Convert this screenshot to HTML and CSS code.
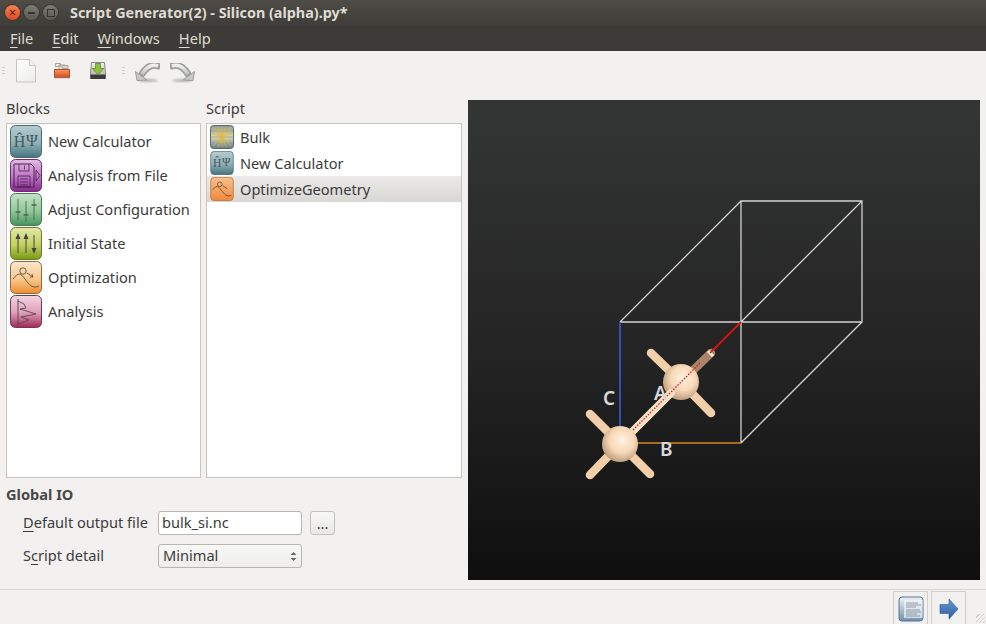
FILE: index.html
```html
<!DOCTYPE html>
<html lang="en">
<head>
<meta charset="utf-8">
<title>Script Generator(2) - Silicon (alpha).py*</title>
<link rel="stylesheet" href="styles.css">
</head>
<body>
<svg class="defs" width="0" height="0" aria-hidden="true">
  <defs>
    <linearGradient id="gCalc" x1="0" y1="0" x2="0" y2="1"><stop offset="0" stop-color="#b4ccd0"/><stop offset=".55" stop-color="#8fb0b6"/><stop offset="1" stop-color="#44727e"/></linearGradient>
    <linearGradient id="gFile" x1="0" y1="0" x2="0" y2="1"><stop offset="0" stop-color="#e2bce4"/><stop offset=".55" stop-color="#bd74c2"/><stop offset="1" stop-color="#85278f"/></linearGradient>
    <linearGradient id="gAdj" x1="0" y1="0" x2="0" y2="1"><stop offset="0" stop-color="#c5e2c6"/><stop offset=".55" stop-color="#93c89a"/><stop offset="1" stop-color="#43955a"/></linearGradient>
    <linearGradient id="gInit" x1="0" y1="0" x2="0" y2="1"><stop offset="0" stop-color="#e3e9a8"/><stop offset=".55" stop-color="#c0d060"/><stop offset="1" stop-color="#7b9a14"/></linearGradient>
    <linearGradient id="gOpt" x1="0" y1="0" x2="0" y2="1"><stop offset="0" stop-color="#fde6cc"/><stop offset=".55" stop-color="#fbc88e"/><stop offset="1" stop-color="#ef8d2a"/></linearGradient>
    <linearGradient id="gAna" x1="0" y1="0" x2="0" y2="1"><stop offset="0" stop-color="#f3d6e2"/><stop offset=".55" stop-color="#e09cb8"/><stop offset="1" stop-color="#a0265a"/></linearGradient>
    <linearGradient id="gOptSel" x1="0" y1="0" x2="0" y2="1"><stop offset="0" stop-color="#fbc08c"/><stop offset="1" stop-color="#f08a3c"/></linearGradient>
    <linearGradient id="gBulk" x1="0" y1="0" x2="0" y2="1"><stop offset="0" stop-color="#8a9aa0"/><stop offset=".5" stop-color="#e0d8a8"/><stop offset="1" stop-color="#5d7d94"/></linearGradient>
    <linearGradient id="gGlossy" x1="0" y1="0" x2="0" y2="1"><stop offset="0" stop-color="#efefed"/><stop offset="1" stop-color="#c4c4c2"/></linearGradient>
    <linearGradient id="gFolder" x1="0" y1="0" x2="0" y2="1"><stop offset="0" stop-color="#f59a6a"/><stop offset="1" stop-color="#d9471a"/></linearGradient>
    <linearGradient id="gDoc" x1="0" y1="0" x2="1" y2="1"><stop offset="0" stop-color="#fff"/><stop offset="1" stop-color="#ecebe9"/></linearGradient>
    <linearGradient id="gDrive" x1="0" y1="0" x2="0" y2="1"><stop offset="0" stop-color="#f2f2ee"/><stop offset="1" stop-color="#a8aaa4"/></linearGradient>
    <linearGradient id="gLog" x1="0" y1="0" x2="0" y2="1"><stop offset="0" stop-color="#eef2f6"/><stop offset="1" stop-color="#6f90b2"/></linearGradient>
    <linearGradient id="gPaper" x1="0" y1="0" x2="0" y2="1"><stop offset="0" stop-color="#eef1f4"/><stop offset="1" stop-color="#cfdbe6"/></linearGradient>
    <linearGradient id="gArrow" x1="0" y1="0" x2="0" y2="1"><stop offset="0" stop-color="#6a9ad4"/><stop offset="1" stop-color="#2a5a9c"/></linearGradient>
    <linearGradient id="gBg" x1="0" y1="0" x2="0" y2="1"><stop offset="0" stop-color="#343635"/><stop offset=".55" stop-color="#222322"/><stop offset="1" stop-color="#0f0f0f"/></linearGradient>
    <radialGradient id="gBall" cx=".56" cy=".4" r=".62"><stop offset="0" stop-color="#fff2e2"/><stop offset=".55" stop-color="#f8d8b6"/><stop offset="1" stop-color="#b89a7c"/></radialGradient>
    <filter id="soft" x="-20%" y="-40%" width="140%" height="180%"><feGaussianBlur stdDeviation="1.3"/></filter>
    <filter id="lite" x="-10%" y="-10%" width="120%" height="120%"><feGaussianBlur stdDeviation=".45"/></filter>

    <symbol id="i-calc" viewBox="0 0 32 33">
      <rect x=".5" y=".5" width="31" height="32" rx="5" fill="url(#gCalc)" stroke="#4a6a72"/>
      <text x="9.5" y="22" class="psi">Ĥ</text><text x="22" y="21" class="psi">Ψ</text>
    </symbol>
    <symbol id="i-file" viewBox="0 0 32 33">
      <rect x=".5" y=".5" width="31" height="32" rx="5" fill="url(#gFile)" stroke="#6e2a78"/>
      <path d="M4 5h17l3 3v20H4z" fill="none" stroke="#4a2050"/>
      <path d="M9 5v7h10V5M14.500 6.500v4M8 17h12v11H8zM10 20h8M10 23h8M10 26h8" fill="none" stroke="#4a2050" stroke-width=".8"/>
      <path d="M26 11l4 5.500-4 5.500z" fill="none" stroke="#4a2050" stroke-width=".8"/>
    </symbol>
    <symbol id="i-adj" viewBox="0 0 32 33">
      <rect x=".5" y=".5" width="31" height="32" rx="5" fill="url(#gAdj)" stroke="#4a7a58"/>
      <path d="M8 6v21M16 8v21M24 6v21" stroke="#4a6650" stroke-width=".9"/>
      <path d="M5.500 19h5M13.500 22h5M21.500 12h5" stroke="#4a6650" stroke-width="1.600"/>
    </symbol>
    <symbol id="i-init" viewBox="0 0 32 33">
      <rect x=".5" y=".5" width="31" height="32" rx="5" fill="url(#gInit)" stroke="#667a28"/>
      <path d="M8 26V10M16 26V10M24 8v16" stroke="#444" stroke-width="1"/>
      <path d="M5.500 12l2.500-6 2.500 6zM13.500 12l2.500-6 2.500 6zM21.500 21l2.500 6 2.500-6z" fill="#444"/>
    </symbol>
    <symbol id="i-opt" viewBox="0 0 32 33">
      <rect x=".5" y=".5" width="31" height="32" rx="5" fill="url(#gOpt)" stroke="#8a6a44"/>
      <path d="M3 18c5-7 8-6 12 0s8 10 14 7" fill="none" stroke="#5a5048" stroke-width=".9"/>
      <circle cx="13" cy="10" r="3.200" fill="none" stroke="#5a5048" stroke-width=".9"/>
      <path d="M17 12l6 4M23 16l-3 0M23 16l-1-3" fill="none" stroke="#5a5048" stroke-width=".9"/>
    </symbol>
    <symbol id="i-optsel" viewBox="0 0 32 33">
      <rect x=".5" y=".5" width="31" height="32" rx="5" fill="url(#gOptSel)" stroke="#b86a30"/>
      <path d="M3 18c5-7 8-6 12 0s8 10 14 7" fill="none" stroke="#5a4030"/>
      <circle cx="13" cy="10" r="3.200" fill="none" stroke="#5a4030"/>
      <path d="M17 12l6 4" fill="none" stroke="#5a4030"/>
    </symbol>
    <symbol id="i-ana" viewBox="0 0 32 33">
      <rect x=".5" y=".5" width="31" height="32" rx="5" fill="url(#gAna)" stroke="#6e3a50"/>
      <path d="M8 4v26" stroke="#5a4a50"/>
      <path d="M8 6l6 3 2 4-6 1 16 5-15 3 8 3-11 4" fill="none" stroke="#5a4a50" stroke-width=".9"/>
    </symbol>
    <symbol id="i-bulk" viewBox="0 0 24 24">
      <rect x=".5" y=".5" width="23" height="23" rx="3" fill="url(#gBulk)" stroke="#5a6a72"/>
      <path d="M1 6h22M1 12h22M1 18h22" stroke="#8aa0ac" stroke-width=".8"/>
      <path d="M12 12L3 2M12 12L8 2M12 12V2M12 12L16 2M12 12L21 2M12 12L2 8M12 12L22 8M12 12L3 21M12 12L8 22M12 12V22M12 12L16 22M12 12L21 21" stroke="#e8b820" stroke-width=".8"/>
    </symbol>
    <symbol id="i-undo" viewBox="0 0 26 24">
      <ellipse cx="14" cy="21.500" rx="10" ry="1.500" fill="#b0b0ae" filter="url(#soft)"/>
      <g filter="url(#lite)">
        <path d="M8 15C12 9 17 4.500 24 7" fill="none" stroke="#a0a09e" stroke-width="7" stroke-linecap="round"/>
        <path d="M8 15C12 9 17 4.500 24 7" fill="none" stroke="url(#gGlossy)" stroke-width="3.500"/>
        <path d="M1.500 12.500l1.500 9 10-.5z" fill="#c8c8c6" stroke="#9c9c9a"/>
      </g>
    </symbol>
  </defs>
</svg>

<div class="window">
  <header class="titlebar">
    <div class="winbtns">
      <span class="winbtn close">×</span>
      <span class="winbtn"><span class="min-glyph"></span></span>
      <span class="winbtn"><span class="max-glyph"></span></span>
    </div>
    <div class="wintitle">Script Generator(2) - Silicon (alpha).py*</div>
  </header>

  <nav class="menubar">
    <span class="menu"><u>F</u>ile</span>
    <span class="menu"><u>E</u>dit</span>
    <span class="menu"><u>W</u>indows</span>
    <span class="menu"><u>H</u>elp</span>
  </nav>

  <div class="toolbar">
    <span class="handle"></span>
    <svg class="tool doc" width="24" height="26" viewBox="0 0 24 26">
      <path d="M2.500 1.500h13l6 6v16.500h-19z" fill="url(#gDoc)" stroke="#c4c4c0"/>
      <path d="M15.500 1.500v6h6" fill="#f0f0ee" stroke="#c8c8c4"/>
    </svg>
    <svg class="tool open" width="18" height="18" viewBox="0 0 18 18">
      <path d="M2.500 1.500h5v3h-5zM6 3h6l2 2v4H6z" fill="#eceae6" stroke="#a8a49c"/>
      <path d="M9 3.500h6v3H9z" fill="#d8d4cc" stroke="#a8a49c"/>
      <path d="M1.500 7.500h15v8h-15z" fill="url(#gFolder)" stroke="#b84a20"/>
      <path d="M1 15.800h16" stroke="#888" stroke-width=".8"/>
    </svg>
    <svg class="tool save" width="18" height="18" viewBox="0 0 18 18">
      <path d="M2.500 .5h13l1 11v5h-15v-5z" fill="url(#gDrive)" stroke="#85857f"/>
      <rect x="1.500" y="12.500" width="15" height="4.500" fill="#3c3c3a"/>
      <path d="M6.500 1.500h5v5h3.500l-6 6-6-6h3.500z" fill="#8cc040" stroke="#5e8e20" stroke-width=".8"/>
    </svg>
    <span class="handle second"></span>
    <svg class="tool undo" width="26" height="24"><use href="#i-undo"/></svg>
    <svg class="tool redo" width="26" height="24"><use href="#i-undo"/></svg>
  </div>

  <main class="main">
    <section class="side">
      <div class="columns">
        <div class="col col-blocks">
          <div class="col-label">Blocks</div>
          <ul class="list list-blocks">
            <li class="block"><svg class="tile"><use href="#i-calc"/></svg>New Calculator</li>
            <li class="block"><svg class="tile"><use href="#i-file"/></svg>Analysis from File</li>
            <li class="block"><svg class="tile"><use href="#i-adj"/></svg>Adjust Configuration</li>
            <li class="block"><svg class="tile"><use href="#i-init"/></svg>Initial State</li>
            <li class="block"><svg class="tile"><use href="#i-opt"/></svg>Optimization</li>
            <li class="block"><svg class="tile"><use href="#i-ana"/></svg>Analysis</li>
          </ul>
        </div>
        <div class="col col-script">
          <div class="col-label">Script</div>
          <ul class="list list-script">
            <li class="step"><svg class="stile"><use href="#i-bulk"/></svg>Bulk</li>
            <li class="step"><svg class="stile"><use href="#i-calc"/></svg>New Calculator</li>
            <li class="step selected"><svg class="stile"><use href="#i-optsel"/></svg>OptimizeGeometry</li>
          </ul>
        </div>
      </div>
      <div class="io">
        <div class="io-title">Global IO</div>
        <div class="io-row">
          <label class="io-label"><u>D</u>efault output file</label>
          <div class="field">bulk_si.nc</div>
          <div class="dots">...</div>
        </div>
        <div class="io-row">
          <label class="io-label">S<u>c</u>ript detail</label>
          <div class="field combo">Minimal
            <svg class="spin" width="7" height="11" viewBox="0 0 7 11"><path d="M3.500 1L6.500 4H.5zM3.500 10L.5 7h6z" fill="#6a6864"/></svg>
          </div>
        </div>
      </div>
    </section>

    <div class="viewer">
      <svg class="scene" viewBox="468 100 512 480" width="512" height="480">
        <rect x="468" y="100" width="512" height="480" fill="url(#gBg)"/>
        <g class="cell">
          <path d="M741 201H862V322H741ZM620 322H741V443M741 322V443M620 322L741 201M741 322L862 201M741 443L862 322"/>
        </g>
        <line class="axis" x1="620" y1="322" x2="620" y2="443" stroke="#3060e0"/>
        <line class="axis" x1="620" y1="443" x2="741" y2="443" stroke="#d8861c"/>
        <line class="axis" x1="741" y1="322" x2="633" y2="430" stroke="#e01010"/>

        <g class="bond back">
          <line x1="681" y1="382" x2="711" y2="353"/>
        </g>
        <line class="hl" x1="708" y1="351" x2="713" y2="356"/>
        <g class="bond">
          <line x1="681" y1="382" x2="651" y2="353"/>
          <line x1="681" y1="382" x2="711" y2="413"/>
          <line x1="620" y1="444" x2="590" y2="414"/>
          <line x1="620" y1="444" x2="590" y2="475"/>
          <line x1="620" y1="444" x2="650" y2="474"/>
        </g>
        <circle class="ball" cx="681" cy="382" r="18"/>
        <line class="bond-long" x1="620" y1="444" x2="671" y2="393"/>
        <circle class="ball" cx="620" cy="444" r="18"/>
        <line class="dotted" x1="633" y1="430" x2="700" y2="363"/>
        <line class="axis" x1="741" y1="322" x2="710" y2="353" stroke="#e01010"/>
        <text class="axis-label" x="603" y="405">C</text>
        <text class="axis-label" x="654" y="400">A</text>
        <text class="axis-label" x="660" y="456">B</text>
      </svg>
    </div>
  </main>

  <footer class="footer">
    <div class="fbtn">
      <svg width="26" height="26" viewBox="0 0 26 26">
        <rect x="1" y="1" width="24" height="24" rx="3" fill="url(#gLog)" stroke="#5b7490"/>
        <path d="M6 4h18.500v18H6z" fill="url(#gPaper)"/>
        <path d="M8 7h12M8 9h15M8 11h10M8 14h14M8 16h15M8 18h11M8 20h14" stroke="#7c8894" stroke-width=".8"/>
      </svg>
    </div>
    <div class="fbtn">
      <svg width="20" height="22" viewBox="0 0 20 22">
        <path d="M1 6.500h9V1l9 10-9 10v-5.500H1z" fill="url(#gArrow)" stroke="#2a5a9c" stroke-width=".6"/>
      </svg>
    </div>
    <div class="grip"></div>
  </footer>
</div>
</body>
</html>
```

FILE: styles.css
```css
* { box-sizing: border-box; }
html, body { margin: 0; padding: 0; }
body {
  width: 986px;
  height: 624px;
  overflow: hidden;
  background: #f2f1f0;
  color: #3c3c3c;
  font-family: "Noto Sans", "Open Sans", sans-serif;
  font-size: 14.6px;
}
.defs { position: absolute; }
.window { display: flex; flex-direction: column; height: 624px; }

.titlebar {
  height: 25px;
  display: flex;
  align-items: center;
  padding-left: 5px;
  background: linear-gradient(#4f4c47, #3f3d39);
  color: #dfdbd2;
}
.winbtns { display: flex; gap: 4px; width: 65px; }
.winbtn {
  width: 15px;
  height: 15px;
  border-radius: 50%;
  display: flex;
  align-items: center;
  justify-content: center;
  background: linear-gradient(#7d7a73, #5a5850);
  box-shadow: 0 0 0 1px #3a3834;
}
.winbtn.close {
  background: linear-gradient(#f5824e, #dc4a20);
  color: #5a2010;
  font-size: 13px;
  line-height: 15px;
}
.min-glyph { width: 7px; height: 2px; background: #35332f; }
.max-glyph { width: 8px; height: 8px; border: 1px solid #35332f; }
.wintitle { font-weight: 700; font-size: 14.4px; }

.menubar {
  height: 26px;
  display: flex;
  align-items: center;
  gap: 19px;
  padding-left: 10px;
  background: #3c3b37;
  color: #dfdbd2;
  font-size: 14.6px;
}
.menu u { text-underline-offset: 3px; }

.toolbar {
  height: 41px;
  display: flex;
  align-items: center;
  background: #f2f1f0;
  padding-left: 2px;
}
.handle {
  width: 3px;
  height: 9px;
  margin-top: -1px;
  background: repeating-linear-gradient(#cfcdc9 0 1px, transparent 1px 3px);
}
.handle.second { margin-left: 15px; margin-right: 9px; }
.tool { display: block; flex: none; }
.doc { margin-left: 9px; margin-top: -1px; }
.open { margin-left: 15px; margin-top: -2px; }
.save { margin-left: 18px; margin-top: -1px; }
.undo { margin-top: -2px; }
.redo { margin-left: 10px; margin-top: -2px; transform: scaleX(-1); }

.main { flex: 1; display: flex; min-height: 0; }
.side {
  width: 468px;
  padding: 0 6px;
  display: flex;
  flex-direction: column;
}
.columns { display: flex; gap: 5px; height: 386px; }
.col { display: flex; flex-direction: column; }
.col-blocks { width: 195px; }
.col-script { width: 256px; }
.col-label { height: 31px; padding-top: 7px; line-height: 18px; }
.list {
  list-style: none;
  margin: 0;
  padding: 0;
  flex: 1;
  background: #fff;
  border: 1px solid #c7c5c1;
}
.block {
  height: 34px;
  display: flex;
  align-items: center;
  padding-left: 3px;
  gap: 6px;
  white-space: nowrap;
}
.tile { width: 32px; height: 33px; flex: none; margin-top: 1px; }
.step {
  height: 26px;
  display: flex;
  align-items: center;
  padding-left: 3px;
  gap: 6px;
}
.stile { width: 24px; height: 24px; flex: none; }
.selected { background: linear-gradient(#ebeae8, #d8d7d4); }
.psi { font-family: "Liberation Serif", serif; font-size: 16px; fill: #46565a; text-anchor: middle; }

.io { padding-top: 8px; }
.io-title { font-weight: 700; height: 17px; line-height: 17px; color: #4a4845; }
.io-row { display: flex; height: 24px; margin-top: 9px; padding-left: 17px; }
.io-title + .io-row { margin-top: 8px; }
.io-label { width: 135px; flex: none; white-space: nowrap; line-height: 22px; }
.io-label u { text-underline-offset: 3px; }
.field {
  width: 144px;
  height: 24px;
  padding-left: 3px;
  line-height: 21px;
  background: #fff;
  border: 1px solid #b8b6b1;
  border-radius: 3px;
}
.combo {
  position: relative;
  padding-left: 4px;
  background: linear-gradient(#f8f8f7, #eeedeb);
}
.spin { position: absolute; right: 4px; top: 6px; }
.dots {
  width: 25px;
  height: 24px;
  margin-left: 8px;
  text-align: center;
  line-height: 22px;
  background: linear-gradient(#f8f8f7, #e9e8e6);
  border: 1px solid #c4c2bd;
  border-radius: 3px;
}

.viewer { padding-top: 8px; }
.scene { display: block; }
.cell path { fill: none; stroke: #d2d2d0; stroke-width: 1.300; }
.axis { stroke-width: 1.600; }
.bond line { stroke: #f2cfa9; stroke-width: 8.500; stroke-linecap: round; }
.bond.back line { stroke: #a98468; }
.bond-long { stroke: #fbe3c6; stroke-width: 8px; stroke-linecap: round; }
.hl { stroke: #fff3dc; stroke-width: 3px; }
.ball { fill: url(#gBall); }
.dotted { stroke: #e01010; stroke-width: 1.300; stroke-dasharray: 1.500 1.500; }
.axis-label { font-family: "Noto Sans", sans-serif; font-weight: 600; font-size: 19px; fill: #d8d8d8; }

.footer {
  height: 35px;
  display: flex;
  justify-content: flex-end;
  align-items: flex-start;
  gap: 3px;
  padding: 1px 20px 0 0;
  border-top: 1px solid #d9d7d3;
  position: relative;
}
.fbtn {
  width: 35px;
  height: 34px;
  display: flex;
  align-items: center;
  justify-content: center;
  border: 1px solid #d2d0cc;
  border-bottom: 0;
}
.grip {
  position: absolute;
  right: 1px;
  bottom: 1px;
  width: 9px;
  height: 9px;
  background: repeating-linear-gradient(135deg, transparent 0 2px, #d0cec9 2px 3px);
}
```
